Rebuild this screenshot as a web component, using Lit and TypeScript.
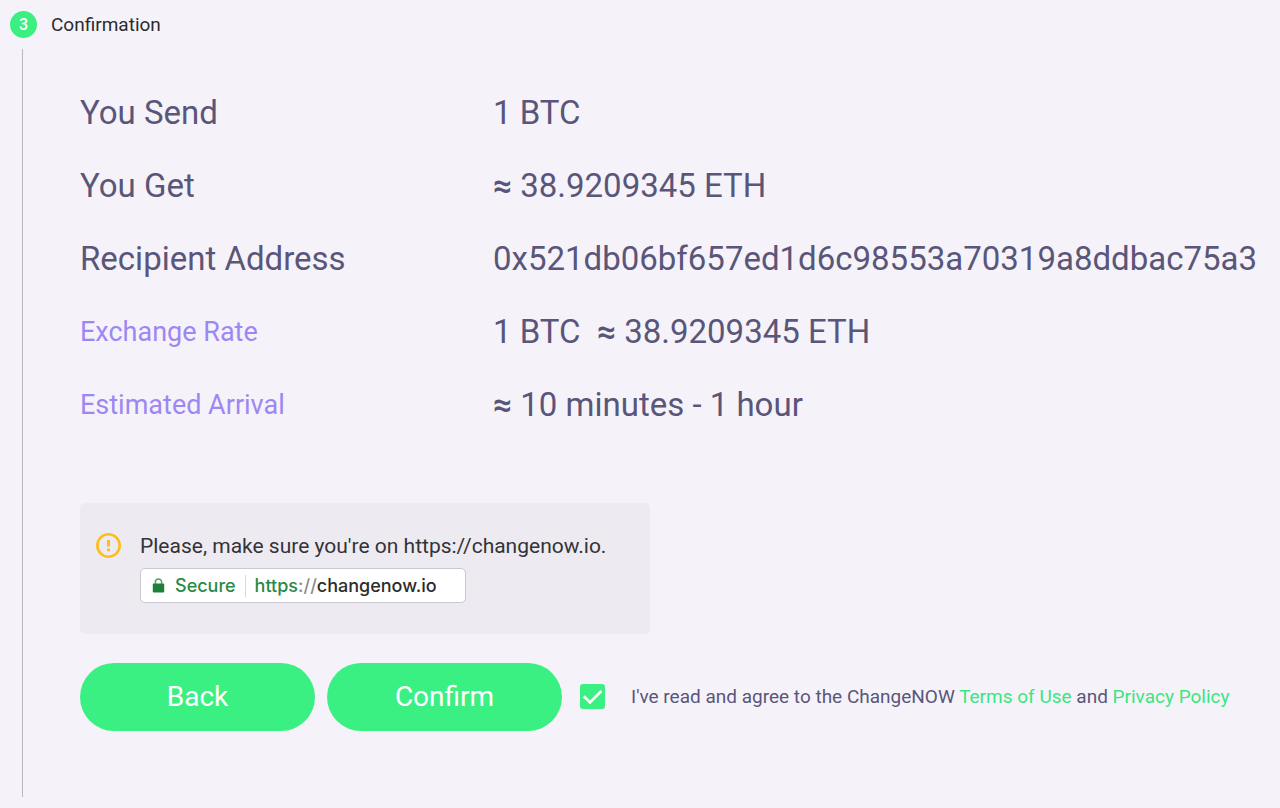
import { LitElement, html, css } from "lit";
import { customElement, state } from "lit/decorators.js";

interface Detail {
  label: string;
  value: string;
  minor?: boolean;
}

@customElement("app-root")
export class AppRoot extends LitElement {
  static styles = css`
    :host {
      min-height: 100vh;
      box-sizing: border-box;
      padding: 10px 10px 11px;
      background: #f5f3f9;
      color: #5a5679;
      font-family: Roboto, sans-serif;
      display: flex;
      flex-direction: column;
    }
    .step { display: flex; align-items: center; gap: 14px; height: 28px; color: #2b2b2f; }
    .num {
      width: 27px; height: 27px; border-radius: 50%;
      display: grid; place-items: center;
      background: #3bf082; color: #fff; font-size: 16px; font-weight: 500;
    }
    h2 { margin: 0; font-size: 19px; font-weight: 400; }
    .body {
      flex: 1; margin: 11px 0 0 12px; padding: 27px 0 65px 57px;
      border-left: 1px solid #b9b8bd;
    }
    dl { margin: 0 0 62px; }
    .row { display: grid; grid-template-columns: 413px 1fr; align-items: center; height: 73px; }
    dt, dd { margin: 0; font-size: 33px; line-height: 40px; white-space: pre; }
    .minor { font-size: 27px; color: #9d88f3; }
    .approx { font-weight: 700; }
    .notice {
      width: 570px; max-width: 100%; box-sizing: border-box;
      display: flex; gap: 19px; padding: 30px 16px 31px;
      border-radius: 5px; background: #edebf1; color: #333337;
    }
    .notice p { margin: 0 0 9px; font-size: 21px; line-height: 26px; }
    .warn { width: 25px; height: 25px; flex: none; }
    .bar {
      display: flex; align-items: center; width: 326px; height: 35px;
      box-sizing: border-box; padding: 0 11px;
      border: 1px solid #cac9d0; border-radius: 5px; background: #fff;
      font: 500 18px/24px Inter, sans-serif; color: #8c8c8c;
    }
    .lock { width: 13px; height: 15px; margin-right: 10px; }
    .green { color: #2a8a44; }
    .sep { width: 1px; height: 22px; margin: 0 9px; background: #d8d8d8; }
    .host { color: #2c2c2c; }
    .actions { display: flex; align-items: center; margin-top: 29px; }
    button {
      width: 235px; height: 68px; margin-right: 12px; padding: 0 0 2px; border: 0;
      border-radius: 34px; background: #3bf082; color: #fff;
      font: 400 28px Roboto, sans-serif; cursor: pointer;
    }
    .agree { display: flex; align-items: center; gap: 26px; margin-left: 6px; padding-bottom: 2px; font-size: 19px; }
    .check { position: relative; width: 25px; height: 25px; }
    .check input { appearance: none; display: block; width: 25px; height: 25px; margin: 0; border-radius: 3px; border: 2px solid #3bf082; }
    .check input:checked { background: #3bf082; }
    .check svg { position: absolute; inset: 0; pointer-events: none; }
    a { color: #3be681; text-decoration: none; }
  `;

  @state() private agreed = true;

  private details: Detail[] = [
    { label: "You Send", value: "1 BTC" },
    { label: "You Get", value: "≈ 38.9209345 ETH" },
    { label: "Recipient Address", value: "0x521db06bf657ed1d6c98553a70319a8ddbac75a3" },
    { label: "Exchange Rate", value: "1 BTC  ≈ 38.9209345 ETH", minor: true },
    { label: "Estimated Arrival", value: "≈ 10 minutes - 1 hour", minor: true },
  ];

  private renderValue(value: string) {
    return value.split(/(≈)/).map((part) => (part === "≈" ? html`<span class="approx">≈</span>` : part));
  }

  render() {
    return html`
      <header class="step"><span class="num">3</span><h2>Confirmation</h2></header>
      <main class="body">
        <dl>
          ${this.details.map((d) => html`<div class="row"><dt class=${d.minor ? "minor" : ""}>${d.label}</dt><dd>${this.renderValue(d.value)}</dd></div>`)}
        </dl>
        <section class="notice">
          <svg class="warn" viewBox="0 0 25 25" fill="none" stroke="#fdbe19">
            <circle cx="12.5" cy="12.5" r="11.2" stroke-width="2.6" />
            <path d="M12.5 7v6.5M12.5 15.5v2.7" stroke-width="3" />
          </svg>
          <div>
            <p>Please, make sure you're on https://changenow.io.</p>
            <div class="bar">
              <svg class="lock" viewBox="0 0 13 15"><rect x="0.8" y="5.5" width="11.4" height="9" rx="1" fill="#1c8038" /><path d="M3.4 7V4a3.1 3.1 0 0 1 6.2 0V7" fill="none" stroke="#1c8038" stroke-opacity="0.75" stroke-width="1.5" /></svg>
              <span class="green">Secure</span><span class="sep"></span><span class="green">https</span><span>://</span><span class="host">changenow.io</span>
            </div>
          </div>
        </section>
        <div class="actions">
          <button type="button">Back</button>
          <button type="button" ?disabled=${!this.agreed}>Confirm</button>
          <div class="agree">
            <span class="check">
              <input id="agree" type="checkbox" .checked=${this.agreed} @change=${(e: Event) => (this.agreed = (e.target as HTMLInputElement).checked)} />
              <svg viewBox="0 0 25 25" fill="none" stroke="#fff" stroke-width="2.7"><path d="M3.8 12.2l6.2 6.2L21.4 7" /></svg>
            </span>
            <label for="agree">I've read and agree to the ChangeNOW <a href="#terms">Terms of Use</a> and <a href="#privacy">Privacy Policy</a></label>
          </div>
        </div>
      </main>
    `;
  }
}
